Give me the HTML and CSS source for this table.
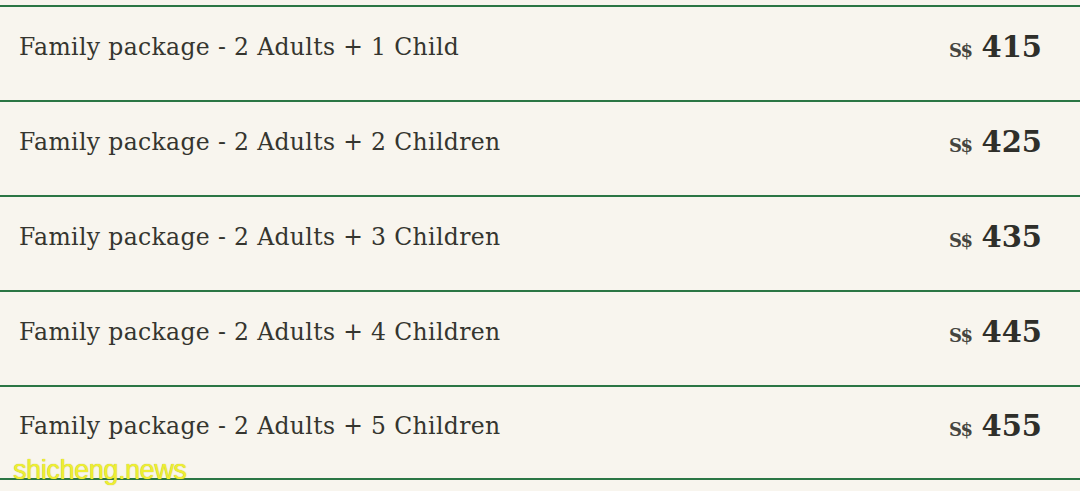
FILE: index.html
```html
<!DOCTYPE html>
<html lang="en">
<head>
<meta charset="utf-8">
<link rel="stylesheet" href="styles.css">
</head>
<body>
<div class="list">
  <div class="row"><span class="name">Family package - 2 Adults + 1 Child</span><span class="price"><span class="cur">S$</span><span class="amt">415</span></span></div>
  <div class="row"><span class="name">Family package - 2 Adults + 2 Children</span><span class="price"><span class="cur">S$</span><span class="amt">425</span></span></div>
  <div class="row"><span class="name">Family package - 2 Adults + 3 Children</span><span class="price"><span class="cur">S$</span><span class="amt">435</span></span></div>
  <div class="row"><span class="name">Family package - 2 Adults + 4 Children</span><span class="price"><span class="cur">S$</span><span class="amt">445</span></span></div>
  <div class="row last"><span class="name">Family package - 2 Adults + 5 Children</span><span class="price"><span class="cur">S$</span><span class="amt">455</span></span></div>
</div>
<div class="watermark">shicheng.news</div>
</body>
</html>
```

FILE: styles.css
```css
html, body {
  margin: 0;
  padding: 0;
  background: #f8f5ee;
}
body {
  width: 1080px;
  height: 491px;
  overflow: hidden;
  position: relative;
  font-family: "DejaVu Serif", "Liberation Serif", serif;
  color: #35352f;
}
.list {
  padding-top: 5px;
}
.row {
  box-sizing: border-box;
  height: 95px;
  border-top: 2px solid #2b7644;
  display: flex;
  justify-content: space-between;
  align-items: center;
  padding: 0 38px 14px 19px;
}
.row.last {
  border-bottom: 2px solid #2b7644;
}
.name {
  font-size: 23.5px;
  letter-spacing: 0.35px;
}
.price {
  display: flex;
  align-items: baseline;
  gap: 10px;
}
.cur {
  font-size: 18px;
  font-weight: bold;
  letter-spacing: -1.5px;
  color: #454540;
}
.amt {
  font-size: 29px;
  font-weight: bold;
  color: #2f2f2a;
}
.watermark {
  position: absolute;
  left: 13px;
  top: 455px;
  font-family: "Liberation Sans", sans-serif;
  font-size: 27px;
  color: #eeee33;
  letter-spacing: -0.4px;
  text-shadow: 0 0 1px #b8b800;
}
```
